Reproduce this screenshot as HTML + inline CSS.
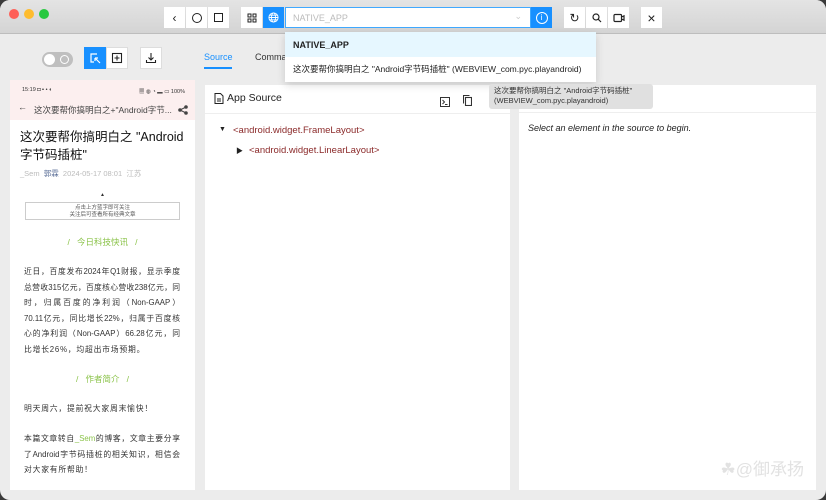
<!DOCTYPE html>
<html><head><meta charset="utf-8"><style>
*{box-sizing:border-box;margin:0;padding:0}
body{width:826px;height:500px;background:#3a3a3a;font-family:"Liberation Sans","Noto Sans CJK SC",sans-serif;overflow:hidden;position:relative}
.win{position:absolute;left:0;top:0;width:826px;height:500px;background:#ececec;border-radius:10px;overflow:hidden}
.tb{position:absolute;left:0;top:0;width:826px;height:34px;background:linear-gradient(#e4e4e4,#d4d4d4);border-bottom:1px solid #bdbdbd}
.dot{position:absolute;top:9px;width:10px;height:10px;border-radius:50%}
.btn{position:absolute;top:7px;height:21px;width:21px;background:#fff;display:flex;align-items:center;justify-content:center;font-size:12px;color:#222}
.abs{position:absolute}
.ph{position:absolute;left:10px;top:80px;width:185px;height:410px;background:#fff;overflow:hidden}
.pt{font-size:7.8px;color:#333;line-height:15.5px;position:absolute;left:14px;width:156px}
.pt div{text-align:justify;text-align-last:justify;white-space:nowrap}
.pt div.l{text-align-last:left;letter-spacing:.8px}
.panel{position:absolute;background:#fff}
.tag{color:#8b2a2a;font-size:9.5px}
</style></head><body><div class="win">
<div class="tb">
<div class="dot" style="left:9px;background:#fe5f57"></div>
<div class="dot" style="left:24px;background:#febc2e"></div>
<div class="dot" style="left:39px;background:#28c840"></div>
<div class="btn" style="left:164px">&#x2039;</div>
<div class="btn" style="left:186px"><div style="width:10px;height:10px;border:1.3px solid #222;border-radius:50%"></div></div>
<div class="btn" style="left:208px"><div style="width:9px;height:9px;border:1.3px solid #222"></div></div>
<div class="btn" style="left:241px"><svg width="10" height="10" viewBox="0 0 10 10" fill="none" stroke="#222" stroke-width="1"><rect x="1" y="1" width="3" height="3"/><rect x="6" y="1" width="3" height="3"/><rect x="1" y="6" width="3" height="3"/><rect x="6" y="6" width="3" height="3"/></svg></div>
<div class="btn" style="left:263px;background:#1890ff"><svg width="11" height="11" viewBox="0 0 12 12" fill="none" stroke="#fff" stroke-width="1"><circle cx="6" cy="6" r="5"/><ellipse cx="6" cy="6" rx="2.2" ry="5"/><path d="M1 6h10M2 3.5h8M2 8.5h8"/></svg></div>
<div class="abs" style="left:285px;top:7px;width:246px;height:21px;background:#fff;border:1px solid #40a9ff;font-size:9px;color:#bbb;padding:5px 7px">NATIVE_APP<span style="position:absolute;right:8px;top:3px;color:#ccc">&#x2304;</span></div>
<div class="btn" style="left:531px;background:#1890ff;color:#fff"><div style="width:12px;height:12px;border:1.2px solid #fff;border-radius:50%;font-size:8px;text-align:center;line-height:10px">i</div></div>
<div class="btn" style="left:564px">&#x21bb;</div>
<div class="btn" style="left:586px"><svg width="10" height="10" viewBox="0 0 10 10" fill="none" stroke="#222" stroke-width="1.2"><circle cx="4" cy="4" r="3"/><path d="M6.2 6.2L9 9"/></svg></div>
<div class="btn" style="left:608px"><svg width="12" height="10" viewBox="0 0 12 10" fill="none" stroke="#222" stroke-width="1.2"><rect x="1" y="1.5" width="7.5" height="7" rx="1"/><path d="M8.5 4l2.5-1.2v4.4L8.5 6"/></svg></div>
<div class="btn" style="left:641px;font-size:14px">&#xd7;</div>
</div>
<div class="abs" style="left:42px;top:52px;width:31px;height:15px;border-radius:8px;background:#bfbfbf"><div style="position:absolute;left:2px;top:2px;width:11px;height:11px;border-radius:50%;background:#fff"></div><div style="position:absolute;left:18px;top:3px;width:9px;height:9px;border-radius:50%;border:1px solid #fff"></div></div>
<div class="abs" style="left:84px;top:47px;width:22px;height:22px;background:#1890ff"><svg width="22" height="22" viewBox="0 0 22 22" fill="none" stroke="#fff" stroke-width="1.2"><path d="M13 7H7v8h3"/><path d="M11 11l5 5M11 11h3M11 11v3"/></svg></div>
<div class="abs" style="left:106px;top:47px;width:22px;height:22px;background:#fff;border:1px solid #ddd"><svg width="20" height="20" viewBox="0 0 20 20" fill="none" stroke="#222" stroke-width="1.1"><rect x="5.5" y="5.5" width="9" height="9"/><path d="M10 7.5v5M7.5 10h5"/></svg></div>
<div class="abs" style="left:140px;top:47px;width:22px;height:22px;background:#fff;border:1px solid #ddd"><svg width="20" height="20" viewBox="0 0 20 20" fill="none" stroke="#222" stroke-width="1.1"><path d="M10 5v7M7.5 9.5L10 12l2.5-2.5M5.5 12v2.5h9V12"/></svg></div>
<div class="abs" style="left:204px;top:52px;font-size:9px;color:#1890ff">Source</div>
<div class="abs" style="left:204px;top:67px;width:28px;height:2px;background:#1890ff"></div>
<div class="abs" style="left:255px;top:52px;font-size:9px;color:#333">Comma</div>
<div class="ph">
<div style="background:#fcefef;height:40px;position:relative">
<div class="abs" style="left:12px;top:7px;font-size:5.5px;color:#333">15:19 ◘ ▪ • ◐</div>
<div class="abs" style="right:10px;top:7px;font-size:5.5px;color:#333">▦ ◍ ◔ ▂ ▭ 100%</div>
<div class="abs" style="left:8px;top:22px;font-size:9px;color:#444">&#x2190;</div>
<div class="abs" style="left:24px;top:24px;font-size:8.5px;color:#444;white-space:nowrap">这次要帮你搞明白之+"Android字节...</div>
<div class="abs" style="right:7px;top:22px"><svg width="10" height="10" viewBox="0 0 10 10" fill="#444" stroke="#444"><circle cx="8" cy="2" r="1.3"/><circle cx="2" cy="5" r="1.3"/><circle cx="8" cy="8" r="1.3"/><path d="M8 2L2 5l6 3" fill="none"/></svg></div>
</div>
<div class="abs" style="left:10px;top:48px;width:168px;font-size:12.5px;line-height:18px;color:#111">这次要帮你搞明白之 "Android字节码插桩"</div>
<div class="abs" style="left:10px;top:88px;font-size:7.5px;color:#bbb;white-space:nowrap">_Sem &nbsp;<span style="color:#576b95">郭霖</span>&nbsp; 2024-05-17 08:01 &nbsp;江苏</div>
<div class="abs" style="left:90px;top:112px;font-size:5px;color:#333">▲</div>
<div class="abs" style="left:15px;top:122px;width:155px;height:18px;border:1px solid #ccc;font-size:5.5px;text-align:center;line-height:7px;color:#555;padding-top:2px">点击上方蓝字即可关注<br>关注后可查看所有经典文章</div>
<div class="abs" style="left:0;width:185px;top:156px;text-align:center;font-size:8.5px;color:#8bc34a">/&nbsp;&nbsp;&nbsp;今日科技快讯&nbsp;&nbsp;&nbsp;/</div>
<div class="pt" style="top:184px">
<div>近日，百度发布2024年Q1财报，显示季度</div>
<div>总营收315亿元，百度核心营收238亿元，同</div>
<div>时，归属百度的净利润（Non-GAAP）</div>
<div>70.11亿元，同比增长22%，归属于百度核</div>
<div>心的净利润（Non-GAAP）66.28亿元，同</div>
<div class="l">比增长26%，均超出市场预期。</div>
</div>
<div class="abs" style="left:0;width:185px;top:293px;text-align:center;font-size:8.5px;color:#8bc34a">/&nbsp;&nbsp;&nbsp;作者简介&nbsp;&nbsp;&nbsp;/</div>
<div class="pt" style="top:321px"><div class="l">明天周六，提前祝大家周末愉快！</div></div>
<div class="pt" style="top:351px">
<div>本篇文章转自<span style="color:#8bc34a">_Sem</span>的博客，文章主要分享</div>
<div>了Android字节码插桩的相关知识，相信会</div>
<div class="l">对大家有所帮助！</div>
</div>
</div>
<div class="panel" style="left:205px;top:85px;width:305px;height:405px">
<div style="height:29px;border-bottom:1px solid #eee;position:relative">
<div class="abs" style="left:9px;top:7px;font-size:10.5px;color:#222;display:flex;align-items:center;gap:3px"><svg width="10" height="11" viewBox="0 0 10 11" fill="none" stroke="#222" stroke-width="1"><path d="M1 .5h5.5L9 3v7.5H1z"/><path d="M3 6h4M3 8h4"/></svg>App Source</div>
<div class="abs" style="left:235px;top:9px"><svg width="10" height="10" viewBox="0 0 10 10" fill="none" stroke="#333" stroke-width="1"><rect x=".5" y=".5" width="9" height="9"/><path d="M2.5 3l2 2-2 2M5 7.5h2.5"/></svg></div>
<div class="abs" style="left:258px;top:8px"><svg width="9" height="11" viewBox="0 0 9 11" fill="none" stroke="#333" stroke-width="1.1"><rect x="2.5" y="2.5" width="6" height="8"/><path d="M.5 8.5V.5h6"/></svg></div>
</div>
<div class="abs" style="left:14px;top:41px;font-size:7px;color:#222">&#x25BC;</div>
<div class="abs tag" style="left:28px;top:40px">&lt;android.widget.FrameLayout&gt;</div>
<div class="abs" style="left:31px;top:61px;font-size:7px;color:#222">&#x25B6;</div>
<div class="abs tag" style="left:44px;top:60px">&lt;android.widget.LinearLayout&gt;</div>
</div>
<div class="panel" style="left:519px;top:85px;width:297px;height:405px">
<div style="height:28px;border-bottom:1px solid #eee"></div>
<div class="abs" style="left:9px;top:38px;font-size:9px;font-style:italic;color:#222">Select an element in the source to begin.</div>
<div class="abs" style="right:12px;bottom:10px;font-size:17px;color:#e2e2e2">&#x2618;@御承扬</div>
</div>
<div class="abs" style="left:285px;top:32px;width:311px;height:50px;background:#fff;box-shadow:0 3px 8px rgba(0,0,0,.15)">
<div style="background:#e6f7ff;height:25px;padding:8px 8px;font-size:9px;font-weight:bold;color:#222">NATIVE_APP</div>
<div style="padding:6px 8px;font-size:8.5px;color:#222;white-space:nowrap">这次要帮你搞明白之 "Android字节码插桩" (WEBVIEW_com.pyc.playandroid)</div>
</div>
<div class="abs" style="left:489px;top:84px;width:164px;height:25px;background:#e0e0e0;border-radius:3px;font-size:7.5px;color:#333;padding:2px 5px;line-height:10px;white-space:nowrap">这次要帮你搞明白之 "Android字节码插桩"<br>(WEBVIEW_com.pyc.playandroid)</div>
</div></body></html>
